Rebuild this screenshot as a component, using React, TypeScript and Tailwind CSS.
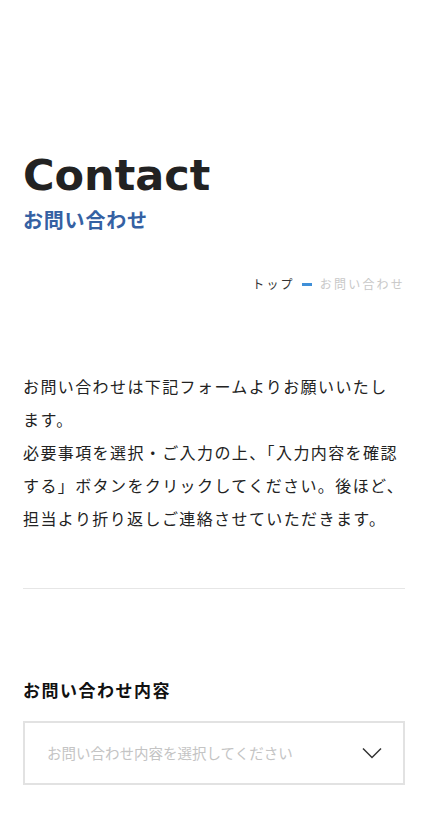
import React from "react";

const jp = { fontFamily: '"Noto Sans CJK JP", "Noto Sans", sans-serif' };

export default function App() {
  return (
    <div className="min-h-[834px] bg-white px-[23px] text-[#222]" style={jp}>
      <h1
        className="pt-[154px] text-[43px] font-bold leading-none text-[#222]"
        style={{ fontFamily: '"DejaVu Sans", sans-serif' }}
      >
        Contact
      </h1>
      <p className="mt-[9px] text-[20px] font-bold leading-[28px] tracking-[0.8px] text-[#3561a3]">
        お問い合わせ
      </p>
      <nav className="mt-[40px] flex items-center justify-end text-[12px] leading-[20px] tracking-[2.2px]">
        <span className="text-[#333]">トップ</span>
        <span className="ml-[7px] mr-[8px] h-[3px] w-[10px] bg-[#3f8fd8]" />
        <span className="text-[#c8c8c8]">お問い合わせ</span>
      </nav>
      <div className="mt-[76px] whitespace-nowrap text-[16px] leading-[33px] tracking-[1.4px] text-[#222]">
        <div>お問い合わせは下記フォームよりお願いいたし</div>
        <div>ます。</div>
        <div>必要事項を選択・ご入力の上、「入力内容を確認</div>
        <div>する」ボタンをクリックしてください。後ほど、</div>
        <div>担当より折り返しご連絡させていただきます。</div>
      </div>
      <hr className="mt-[53px] border-0 border-t border-[#e6e6e6]" />
      <label className="mt-[88px] block text-[17px] font-bold leading-[26px] tracking-[1.5px] text-[#111]">
        お問い合わせ内容
      </label>
      <div className="mt-[18px] flex h-[64px] items-center justify-between border-2 border-[#e2e2e2] pl-[22px] pr-[21px]">
        <span className="text-[14.5px] text-[#c4c4c4]">
          お問い合わせ内容を選択してください
        </span>
        <svg width="20" height="12" viewBox="0 0 20 12" fill="none">
          <path d="M1 1.5 L10 10.5 L19 1.5" stroke="#333" strokeWidth="1.5" />
        </svg>
      </div>
    </div>
  );
}
